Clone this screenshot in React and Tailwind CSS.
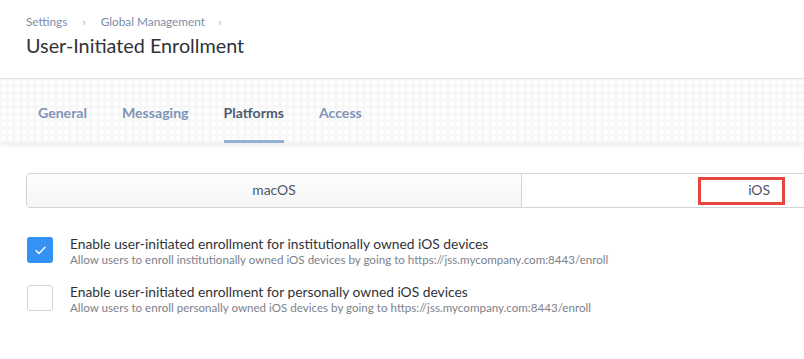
import React, { useState } from 'react';

const tabs = ['General', 'Messaging', 'Platforms', 'Access'];

const options = [
  {
    id: 'institutional',
    label: 'Enable user-initiated enrollment for institutionally owned iOS devices',
    help: 'Allow users to enroll institutionally owned iOS devices by going to https://jss.mycompany.com:8443/enroll'
  },
  {
    id: 'personal',
    label: 'Enable user-initiated enrollment for personally owned iOS devices',
    help: 'Allow users to enroll personally owned iOS devices by going to https://jss.mycompany.com:8443/enroll'
  }
];

const Checkbox = ({ checked, onChange }) => (
  <button
    onClick={onChange}
    className={`w-[26px] h-[26px] shrink-0 rounded-[3px] flex items-center justify-center ${
      checked ? 'bg-[#3592f5]' : 'bg-white border border-[#cfd3da]'
    }`}
  >
    {checked && (
      <svg width="11" height="9" viewBox="0 0 11 9" fill="none">
        <path d="M1 4.6L4 7.5L10 1.2" stroke="white" strokeWidth="1.4" strokeLinecap="round" strokeLinejoin="round" />
      </svg>
    )}
  </button>
);

const App = () => {
  const [activeTab, setActiveTab] = useState('Platforms');
  const [platform, setPlatform] = useState('iOS');
  const [checks, setChecks] = useState({ institutional: true, personal: false });

  return (
    <div className="w-[804px] h-[359px] overflow-hidden bg-white font-['Lato',sans-serif]">
      {/* Header */}
      <div className="h-[79px] px-[26px] pt-[14px] border-b border-[#e6e6e6]">
        <div className="flex items-center text-[11.8px] text-[#7d8ca8] h-[16px]">
          <span>Settings</span>
          <span className="mx-[15px] text-[#a8b0bf]">›</span>
          <span>Global Management</span>
          <span className="ml-[13px] text-[#a8b0bf]">›</span>
        </div>
        <h1 className="mt-[2px] text-[19.8px] leading-[26px] text-[#2f3338]">User-Initiated Enrollment</h1>
      </div>

      {/* Tabs */}
      <div className="h-[64px] bg-[#f7f7f7] bg-[radial-gradient(circle,_#ffffff_35%,_transparent_60%)] bg-[length:7px_7px] flex items-stretch pl-[38px] gap-[35px] shadow-[0_2px_5px_rgba(60,70,90,0.12)]">
        {tabs.map((tab) => (
          <button
            key={tab}
            onClick={() => setActiveTab(tab)}
            className={`relative flex items-center pt-[4px] text-[14.1px] font-bold ${
              activeTab === tab ? 'text-[#4f5b70]' : 'text-[#7f93b5]'
            }`}
          >
            {tab}
            {activeTab === tab && <span className="absolute left-0 right-0 bottom-0 h-[3px] bg-[#95aed3]" />}
          </button>
        ))}
      </div>

      {/* Platform switcher */}
      <div className="pl-[26px] pt-[30px]">
        <div className="flex h-[35px] w-[800px] border border-[#cfd3da] rounded-l-[4px] overflow-hidden">
          <button
            onClick={() => setPlatform('macOS')}
            className="w-[495px] bg-gradient-to-b from-[#fdfdfd] to-[#f5f5f6] text-[13.9px] text-[#4d5566] border-r border-[#cfd3da]"
          >
            macOS
          </button>
          <div className="flex-1 bg-white flex items-center pl-[176px]">
            <button
              onClick={() => setPlatform('iOS')}
              className="w-[87px] h-[28px] border-[3px] border-[#e5473f] text-[13.9px] text-[#4d5566] flex items-center justify-end pr-[12px]"
            >
              iOS
            </button>
          </div>
        </div>
      </div>

      {/* Options */}
      <div className="pl-[27px] pt-[29px] flex flex-col gap-[18px]">
        {options.map((opt) => (
          <div key={opt.id} className="flex items-start gap-[17px]">
            <Checkbox
              checked={checks[opt.id]}
              onChange={() => setChecks({ ...checks, [opt.id]: !checks[opt.id] })}
            />
            <div className="-mt-[2px]">
              <div className="text-[13.8px] leading-[17px] text-[#2f3338]">{opt.label}</div>
              <div className="text-[11.6px] leading-[15px] text-[#7d828b]">{opt.help}</div>
            </div>
          </div>
        ))}
      </div>
    </div>
  );
};

export default App;
